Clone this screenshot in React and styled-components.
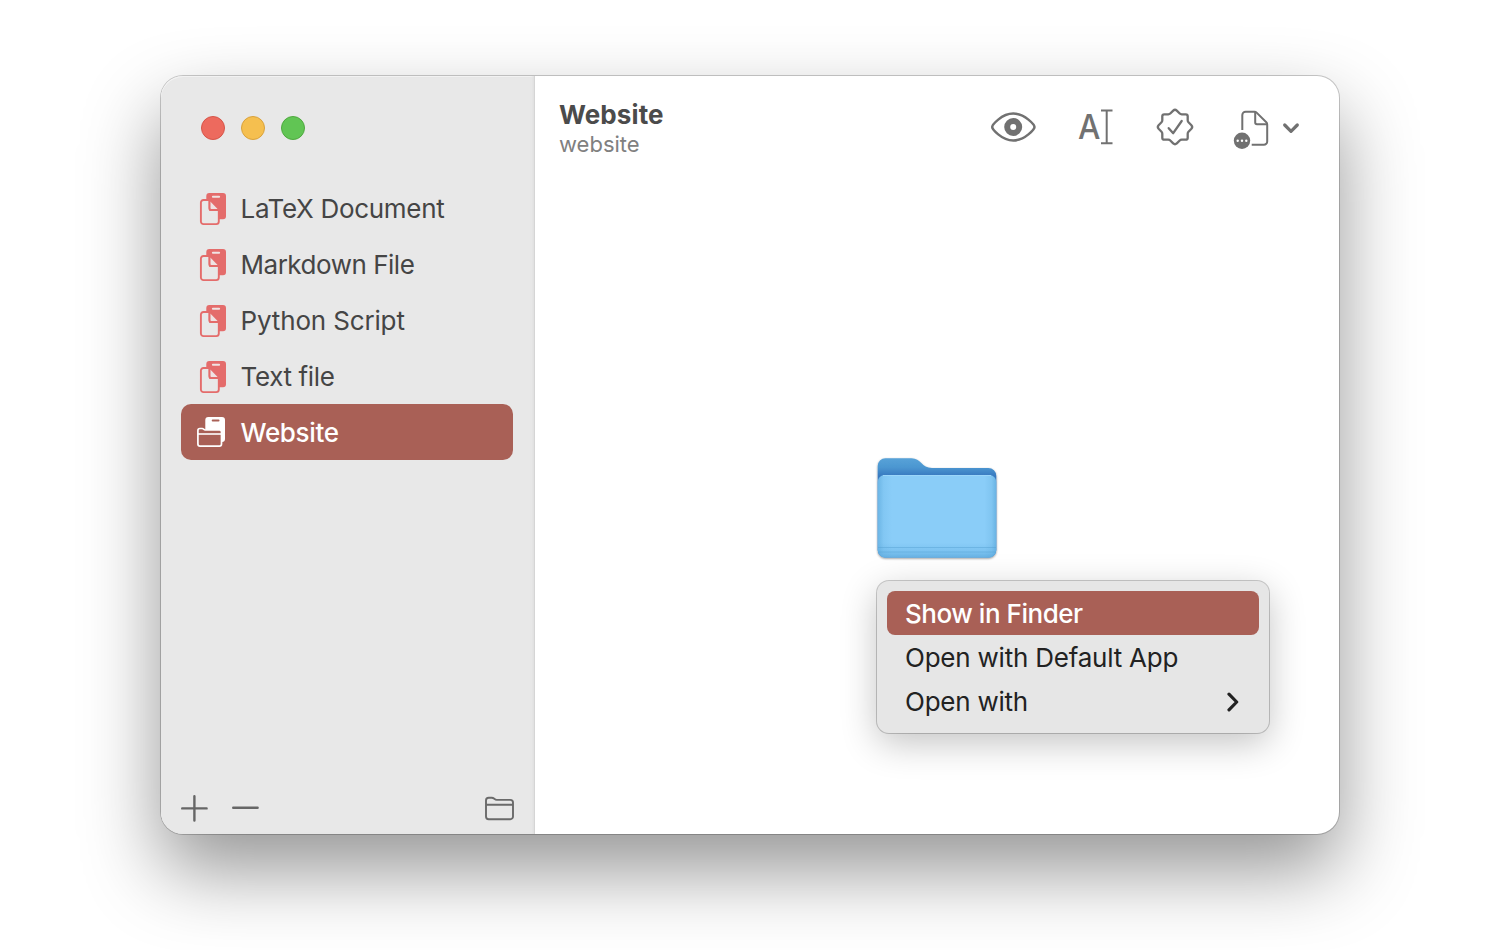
import React from "react";
import styled, { createGlobalStyle } from "styled-components";

const GlobalStyle = createGlobalStyle`
  * { box-sizing: border-box; }
  body {
    margin: 0;
    background: #fff;
    font-family: Inter, "Liberation Sans", sans-serif;
    -webkit-font-smoothing: antialiased;
  }
`;

const Desktop = styled.main`
  width: 1500px;
  height: 950px;
  padding: 76px 161px 0;
  overflow: hidden;
`;

const Window = styled.section`
  position: relative;
  display: flex;
  width: 1178px;
  height: 758px;
  border-radius: 22px;
  background: #fff;
  box-shadow:
    0 0 0 1px rgba(0, 0, 0, 0.2),
    0 36px 78px rgba(0, 0, 0, 0.42);
`;

const Sidebar = styled.aside`
  display: flex;
  flex-direction: column;
  width: 374px;
  padding: 0 21px 0 20px;
  border-radius: 22px 0 0 22px;
  background: #e8e8e8;
  box-shadow: inset -1px 0 0 #d5d5d5, inset -3px 0 3px -1px #dedede, inset 0 1px 0 #f5f5f5;
`;

const TrafficLights = styled.div`
  display: flex;
  gap: 16px;
  padding: 40px 0 0 20px;
`;

const Light = styled.span`
  width: 24px;
  height: 24px;
  border-radius: 50%;
  border: 1px solid ${(p) => p.$edge};
  background: ${(p) => p.$fill};
`;

const TemplateList = styled.ul`
  flex: 1;
  margin: 40px 0 0;
  padding: 0;
  list-style: none;
`;

const TemplateRow = styled.li`
  display: flex;
  align-items: center;
  height: 56px;
  width: 332px;
  padding: 2px 0 0 16px;
  border-radius: 10px;
  background: ${(p) => (p.$selected ? "#a96056" : "transparent")};
  color: ${(p) => (p.$selected ? "#fff" : "#454545")};
`;

const RowLabel = styled.span`
  margin-left: 14.5px;
  font-size: 26px;
  line-height: 32px;
  font-weight: ${(p) => p.$weight || 400};
  letter-spacing: ${(p) => p.$track}px;
  white-space: nowrap;
`;

const SidebarFooter = styled.footer`
  display: flex;
  align-items: center;
  gap: 22px;
  height: 52px;
  svg:last-child { margin-left: auto; }
`;

const Detail = styled.div`
  flex: 1;
  display: flex;
  flex-direction: column;
`;

const Toolbar = styled.header`
  display: flex;
  height: 104px;
  padding: 0 38px 0 24px;
`;

const Titles = styled.div`
  flex: 1;
  padding-top: 23px;
`;

const Title = styled.h1`
  margin: 0;
  font-size: 26px;
  line-height: 32px;
  font-weight: 700;
  letter-spacing: ${(p) => p.$track}px;
  color: #4b4b4b;
`;

const Subtitle = styled.p`
  margin: -1px 0 0;
  font-size: 22px;
  line-height: 28px;
  letter-spacing: ${(p) => p.$track}px;
  color: #808080;
`;

const Tools = styled.div`
  display: flex;
  align-items: flex-start;
  gap: 40px;
  padding-top: 31px;
  svg { overflow: visible; }
`;

const Preview = styled.div`
  padding: 272px 0 0 334px;
`;

const Menu = styled.nav`
  position: absolute;
  left: 716px;
  top: 505px;
  width: 392px;
  height: 152px;
  padding: 10px;
  border-radius: 12px;
  background: #e6e6e6;
  box-shadow:
    0 0 0 1px rgba(0, 0, 0, 0.2),
    0 10px 36px rgba(0, 0, 0, 0.24);
`;

const MenuItem = styled.div`
  display: flex;
  align-items: center;
  justify-content: space-between;
  height: 44px;
  padding: 2px 19px 0 18px;
  border-radius: 8px;
  background: ${(p) => (p.$active ? "#a96056" : "transparent")};
  color: ${(p) => (p.$active ? "#fff" : "#222")};
  font-size: 26px;
  line-height: 32px;
  font-weight: ${(p) => (p.$active ? 500 : 400)};
  letter-spacing: ${(p) => p.$track}px;
  white-space: nowrap;
`;

const FileIcon = () => (
  <svg width="29" height="34" viewBox="197 192 29 34" fill="none">
    <path d="M206.3 199V196a3 3 0 0 1 3-3H223a3 3 0 0 1 3 3V216.200a3 3 0 0 1-3 3H219V211H209V199Z" fill="#e46c6b" />
    <rect x="211.900" y="195.700" width="8.200" height="2" rx="1" fill="#f0e4e4" />
    <path d="M209.700 200H203.500a2.600 2.600 0 0 0-2.600 2.600V221.500a2.600 2.600 0 0 0 2.600 2.600H216.200a2.600 2.600 0 0 0 2.600-2.600V210Z" fill="#e8e8e8" />
    <path d="M209.300 199.200H211L219.700 208.500V211H209.300Z" fill="#e46c6b" />
    <path d="M210.300 201.600V208.900H217.600Z" fill="#efe3e3" />
    <path d="M209.700 200H203.500a2.600 2.600 0 0 0-2.600 2.600V221.500a2.600 2.600 0 0 0 2.600 2.600H216.200a2.600 2.600 0 0 0 2.600-2.600V209.900H211.300a2 2 0 0 1-2-2V200" stroke="#e46c6b" strokeWidth="1.900" />
  </svg>
);

const FolderTemplateIcon = () => (
  <svg width="29" height="34" viewBox="197 416 29 34" fill="none">
    <path d="M205.300 430V420a3 3 0 0 1 3-3H222a3 3 0 0 1 3 3V439a3 3 0 0 1-3 3H221V430Z" fill="#fff" />
    <rect x="211.700" y="419.600" width="7.800" height="1.900" rx=".9" fill="#a96056" />
    <path d="M197.900 444V430.500a2 2 0 0 1 2-2H202.200c1.200 0 1.600 1.500 3 1.500H219.400a2.100 2.100 0 0 1 2.100 2.100V444a2.100 2.100 0 0 1-2.100 2.100H200a2.100 2.100 0 0 1-2.100-2.100Z" fill="#a96056" stroke="#fff" strokeWidth="1.700" />
    <path d="M198 434H221.500" stroke="#fff" strokeWidth="1.600" />
  </svg>
);

const PlusIcon = () => (
  <svg width="28" height="28" viewBox="0 0 28 28" stroke="#666" strokeWidth="2.400" strokeLinecap="round">
    <path d="M1.200 14.400H25.600M13.400 2.200V26.600" />
  </svg>
);

const MinusIcon = () => (
  <svg width="28" height="28" viewBox="0 0 28 28" stroke="#666" strokeWidth="2.400" strokeLinecap="round">
    <path d="M2.200 13.700H26.600" />
  </svg>
);

const FolderIcon = () => (
  <svg width="30" height="28" viewBox="484 794 30 28" fill="none" stroke="#6a6a6a" strokeWidth="1.900">
    <path d="M486 816.500V800.400a2.700 2.700 0 0 1 2.700-2.700H491.600c2.700 0 2.700 2.200 5.200 2.200H510.300a2.700 2.700 0 0 1 2.700 2.700V816.500a2.700 2.700 0 0 1-2.700 2.700H488.700a2.700 2.700 0 0 1-2.700-2.700ZM486 804.700H513" />
  </svg>
);

const EyeIcon = () => (
  <svg width="47" height="42" viewBox="990 107 47 42" fill="none" stroke="#717171">
    <path d="M992.200 127C992.200 125.200 1001.200 113.600 1013.300 113.600S1034.500 125.200 1034.500 127S1025.400 140.400 1013.300 140.400S992.200 128.800 992.200 127Z" strokeWidth="2.500" />
    <circle cx="1013.200" cy="127" r="6" strokeWidth="6" />
  </svg>
);

const RenameIcon = () => (
  <svg width="38" height="42" viewBox="1077 107 38 42">
    <text x="1078" y="138.800" fontSize="34" fontWeight="500" textLength="22.400" lengthAdjust="spacingAndGlyphs" fill="#717171">A</text>
    <path d="M1101 110.500H1112.500M1106.700 110.500V143.300M1101 143.300H1112.500" stroke="#717171" strokeWidth="2" fill="none" />
  </svg>
);

const SealIcon = () => (
  <svg width="38" height="42" viewBox="-20 -20 38 42" fill="none" stroke="#717171" strokeWidth="2.300" strokeLinecap="round" strokeLinejoin="round">
    <path d="M-1.800-16.400Q0-18 1.800-16.400L4.700-13.500Q5.500-12.700 6.700-12.700H10.700Q12.700-12.700 12.700-10.700V-6.700Q12.700-5.500 13.500-4.700L16.400-1.800Q18 0 16.400 1.800L13.500 4.700Q12.700 5.500 12.700 6.700V10.700Q12.700 12.700 10.700 12.700H6.700Q5.500 12.700 4.700 13.500L1.800 16.400Q0 18-1.800 16.400L-4.700 13.500Q-5.500 12.700-6.700 12.700H-10.700Q-12.700 12.700-12.700 10.700V6.700Q-12.700 5.500-13.500 4.700L-16.400 1.800Q-18 0-16.400-1.800L-13.500-4.700Q-12.700-5.500-12.700-6.700V-10.700Q-12.700-12.700-10.700-12.700H-6.700Q-5.500-12.700-4.700-13.500Z" />
    <path d="M-6.300 1.200L-1.800 6.200L6.700-6" />
  </svg>
);

const DocumentActionsIcon = () => (
  <svg width="68" height="42" viewBox="1233 107 68 42" fill="none" stroke="#717171" strokeWidth="2">
    <path d="M1242.300 130V115a3.300 3.300 0 0 1 3.300-3.300H1254.500Q1255.700 111.700 1256.600 112.600L1266.300 122.200Q1267.200 123.100 1267.200 124.400V141.400a3.300 3.300 0 0 1-3.300 3.300H1251.700" />
    <path d="M1255.200 112V122.500a1.800 1.800 0 0 0 1.800 1.800H1267" />
    <circle cx="1242" cy="140.700" r="8.200" fill="#717171" stroke="none" />
    <g fill="#fff" stroke="none">
      <circle cx="1237.700" cy="140.700" r="1.200" />
      <circle cx="1242" cy="140.700" r="1.200" />
      <circle cx="1246.300" cy="140.700" r="1.200" />
    </g>
    <path d="M1284.700 125L1291 131.300L1297.300 125" strokeWidth="3.200" strokeLinecap="round" strokeLinejoin="round" />
  </svg>
);

const BigFolder = () => (
  <svg width="136" height="112" viewBox="869 452 136 112">
    <defs>
      <linearGradient id="back" x1="0" y1="0" x2="0" y2="1">
        <stop offset="0" stopColor="#57a2d8" />
        <stop offset=".09" stopColor="#4c97d1" />
        <stop offset=".18" stopColor="#3879c0" />
      </linearGradient>
      <linearGradient id="sides" x1="0" y1="0" x2="1" y2="0">
        <stop offset="0" stopColor="#6bb5e5" />
        <stop offset=".05" stopColor="#82c7f3" />
        <stop offset=".12" stopColor="#8acdf8" />
        <stop offset=".9" stopColor="#8acdf8" />
        <stop offset=".96" stopColor="#80c5f1" />
        <stop offset="1" stopColor="#69b3e3" />
      </linearGradient>
      <linearGradient id="base" x1="0" y1="0" x2="0" y2="1">
        <stop offset=".82" stopColor="#5aa9de" stopOpacity="0" />
        <stop offset=".92" stopColor="#5aa9de" stopOpacity=".28" />
        <stop offset="1" stopColor="#4f9fd5" stopOpacity=".6" />
      </linearGradient>
      <filter id="drop" x="-10%" y="-10%" width="120%" height="125%">
        <feDropShadow dx="0" dy="1" stdDeviation="1.200" floodColor="#000" floodOpacity=".45" />
      </filter>
    </defs>
    <path d="M877.700 550V466a7.700 7.700 0 0 1 7.700-7.700H911.500C921 458.300 921.500 468 932 468H988.300a8 8 0 0 1 8 8V550a7.500 7.500 0 0 1-7.500 7.500H885.200a7.500 7.500 0 0 1-7.500-7.500Z" fill="url(#back)" filter="url(#drop)" />
    <path d="M877.700 482a7 7 0 0 1 7-7H989.300a7 7 0 0 1 7 7V550a7.500 7.500 0 0 1-7.500 7.500H885.200a7.500 7.500 0 0 1-7.500-7.500Z" fill="url(#sides)" />
    <path d="M877.700 482a7 7 0 0 1 7-7H989.300a7 7 0 0 1 7 7V550a7.500 7.500 0 0 1-7.500 7.500H885.200a7.500 7.500 0 0 1-7.500-7.500Z" fill="url(#base)" />
    <path d="M878 547.500H996M878 552H996" stroke="#559fd0" strokeOpacity=".45" strokeWidth="1" />
    <path d="M883 475.500H991" stroke="#9bd6fa" strokeWidth="1" />
  </svg>
);

const SubmenuArrow = () => (
  <svg width="14" height="20" viewBox="0 0 14 20" fill="none" stroke="#222" strokeWidth="3.200" strokeLinecap="round" strokeLinejoin="round">
    <path d="M3 2.200L10.700 10L3 17.800" />
  </svg>
);

const lights = [
  { fill: "#ed6a5e", edge: "#d65549" },
  { fill: "#f5bf4f", edge: "#d9a23c" },
  { fill: "#61c554", edge: "#4fa93f" },
];

const templates = [
  { name: "LaTeX Document", track: -0.3 },
  { name: "Markdown File", track: -0.48 },
  { name: "Python Script", track: -0.15 },
  { name: "Text file", track: -0.35 },
  { name: "Website", track: -0.35, selected: true },
];

const actions = [
  { name: "Show in Finder", track: -0.47, active: true },
  { name: "Open with Default App", track: -0.22 },
  { name: "Open with", track: -0.25, submenu: true },
];

export default function App() {
  return (
    <Desktop>
      <GlobalStyle />
      <Window>
        <Sidebar>
          <TrafficLights>
            {lights.map((l) => <Light key={l.fill} $fill={l.fill} $edge={l.edge} />)}
          </TrafficLights>
          <TemplateList>
            {templates.map((t) => (
              <TemplateRow key={t.name} $selected={t.selected}>
                {t.selected ? <FolderTemplateIcon /> : <FileIcon />}
                <RowLabel $track={t.track} $weight={t.selected ? 500 : 400}>{t.name}</RowLabel>
              </TemplateRow>
            ))}
          </TemplateList>
          <SidebarFooter>
            <PlusIcon />
            <MinusIcon />
            <FolderIcon />
          </SidebarFooter>
        </Sidebar>
        <Detail>
          <Toolbar>
            <Titles>
              <Title $track={0.1}>Website</Title>
              <Subtitle $track={0}>website</Subtitle>
            </Titles>
            <Tools>
              <EyeIcon />
              <RenameIcon />
              <SealIcon />
              <DocumentActionsIcon />
            </Tools>
          </Toolbar>
          <Preview>
            <BigFolder />
          </Preview>
        </Detail>
        <Menu>
          {actions.map((a) => (
            <MenuItem key={a.name} $active={a.active} $track={a.track}>
              {a.name}
              {a.submenu && <SubmenuArrow />}
            </MenuItem>
          ))}
        </Menu>
      </Window>
    </Desktop>
  );
}
